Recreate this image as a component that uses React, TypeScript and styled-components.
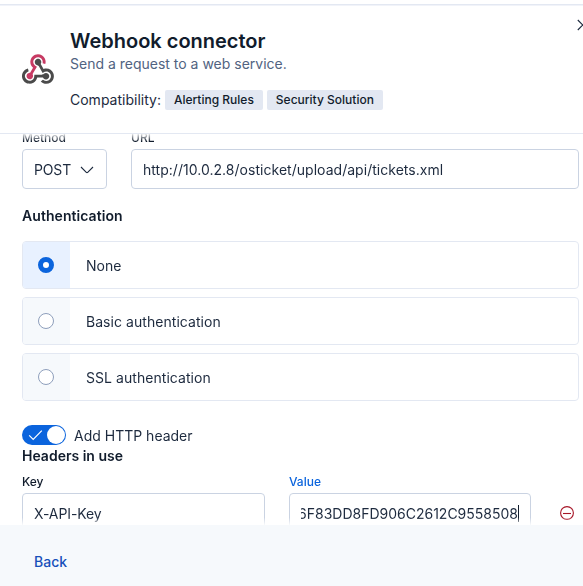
import React from "react";
import styled, { createGlobalStyle } from "styled-components";

const GlobalStyle = createGlobalStyle`
  * { box-sizing: border-box; }
  html, body { margin: 0; padding: 0; background: #fff; overflow: hidden; }
  body {
    font-family: Inter, "Liberation Sans", sans-serif;
    font-size: 14px;
    line-height: 20px;
    color: #1d2a3e;
  }
`;

const Flyout = styled.div`
  display: flex;
  flex-direction: column;
  width: 583px;
  height: 586px;
  overflow: hidden;
  background: #fff;
`;

const TopEdge = styled.div`
  flex: none;
  height: 6px;
  border-top: 4px solid #fff;
  background: linear-gradient(#e3e8f2 50%, #f1f3f9 50%);
`;

const Header = styled.header`
  flex: none;
  display: flex;
  height: 128px;
  padding: 23px 0 0 22px;
  border-bottom: 1px solid #e3e8f2;
`;

const LogoCell = styled.div`
  width: 32px;
  margin-right: 16px;
  padding-top: 25px;

  svg { display: block; }
`;

const HeaderText = styled.div`
  flex: 1;
`;

const Title = styled.h2`
  margin: 0;
  font-size: 20px;
  line-height: 24px;
  font-weight: 600;
  color: #111c2c;
`;

const Description = styled.p`
  margin: 0;
  line-height: 21px;
  color: #516381;
`;

const Compatibility = styled.div`
  display: flex;
  align-items: center;
  gap: 4px;
  margin-top: 16px;
`;

const Badge = styled.span`
  height: 20px;
  padding: 0 9px;
  border-radius: 2px;
  background: #e3e8f2;
  color: #111c2c;
  font-size: 12px;
  font-weight: 500;
  line-height: 20px;
`;

const CloseButton = styled.button`
  flex: none;
  width: 6px;
  height: 12px;
  margin-top: -10px;
  padding: 0;
  border: 0;
  background: none;
  overflow: hidden;

  svg { display: block; }
`;

const Body = styled.main`
  flex: none;
  height: 391px;
  padding: 0 4px 0 22px;
  overflow: hidden;
  mask-image: linear-gradient(
    rgba(0, 0, 0, 0.1) 0,
    #000 7.5px,
    #000 calc(100% - 7.5px),
    rgba(0, 0, 0, 0.1) 100%
  );
`;

const FieldRow = styled.div<{ $columns: string }>`
  display: grid;
  grid-template-columns: ${(p) => p.$columns};
  column-gap: 24px;
`;

const MethodRow = styled(FieldRow)`
  margin-top: -4px;
`;

const Label = styled.label<{ $active?: boolean }>`
  display: block;
  height: 16px;
  margin-bottom: 3px;
  font-size: 12px;
  font-weight: 500;
  line-height: 16px;
  color: ${(p) => (p.$active ? "#0b64dd" : "#111c2c")};
`;

const Control = styled.div<{ $spacing?: string }>`
  display: flex;
  align-items: center;
  height: 40px;
  padding: 1px 11px 0;
  border: 1px solid #cad3e2;
  border-radius: 4px;
  white-space: nowrap;
  letter-spacing: ${(p) => p.$spacing ?? "normal"};
`;

const SelectControl = styled(Control)`
  justify-content: space-between;
  padding-right: 12px;
`;

const ClippedValue = styled.div`
  display: flex;
  justify-content: flex-end;
  width: 100%;
  margin-right: -1px;
  overflow: hidden;
`;

const Caret = styled.i`
  flex: none;
  width: 1px;
  height: 17px;
  margin-top: 1px;
  background: #111c2c;
`;

const SectionTitle = styled.h3`
  margin: 0;
  font-size: 14px;
  line-height: 20px;
  font-weight: 600;
  color: #111c2c;
`;

const AuthTitle = styled(SectionTitle)`
  margin-top: 17px;
  letter-spacing: 0.06px;
`;

const OptionList = styled.div`
  display: flex;
  flex-direction: column;
  gap: 8px;
  margin-top: 15px;
`;

const Option = styled.label`
  display: flex;
  height: 48px;
  border: 1px solid #e3e8f2;
  border-radius: 4px;
  overflow: hidden;
`;

const OptionMark = styled.span<{ $checked?: boolean }>`
  display: flex;
  flex: none;
  align-items: center;
  width: 47px;
  padding: 1px 0 0 15px;
  background: ${(p) => (p.$checked ? "#e8f1ff" : "#f6f9fc")};
`;

const Radio = styled.span<{ $checked?: boolean }>`
  width: 16px;
  height: 16px;
  margin-bottom: 1px;
  border: ${(p) => (p.$checked ? "5px solid #0b64dd" : "1px solid #8e9fbc")};
  border-radius: 50%;
  background: #fff;
`;

const OptionText = styled.span`
  padding: 14px 16px 0;
  letter-spacing: 0.05px;
`;

const SwitchRow = styled.div`
  display: flex;
  align-items: center;
  gap: 8px;
  height: 20px;
  margin-top: 24px;
`;

const SwitchText = styled.span`
  padding-top: 2px;
`;

const Switch = styled.span`
  display: flex;
  align-items: center;
  justify-content: space-between;
  width: 44px;
  height: 20px;
  padding: 0 1px 0 6px;
  border-radius: 10px;
  background: #0b64dd;
`;

const SwitchThumb = styled.span`
  width: 18px;
  height: 18px;
  border-radius: 50%;
  background: #fff;
`;

const HeadersTitle = styled(SectionTitle)`
  margin-top: 1px;
`;

const HeaderFields = styled(FieldRow)`
  margin-top: 8px;
`;

const RemoveCell = styled.div`
  display: flex;
  padding: 32px 0 0 5px;
`;

const Footer = styled.footer`
  flex: 1;
  padding: 27px 34px;
  background: #f6f9fc;
`;

const BackButton = styled.button`
  display: block;
  padding: 0;
  border: 0;
  background: none;
  color: #1750ba;
  font: 500 14px/20px Inter, "Liberation Sans", sans-serif;
`;

const WebhookLogo = () => (
  <svg width="32" height="30" viewBox="0 0 256 239">
    <path
      fill="#C73A63"
      d="M119.54 100.503C108.93 118.339 98.765 135.611 88.388 152.754 85.723 157.154 84.404 160.739 86.533 166.333 92.411 181.787 84.119 196.826 68.535 200.908 53.838 204.759 39.519 195.1 36.603 179.365 34.019 165.438 44.827 151.785 60.182 149.608 61.469 149.424 62.782 149.403 64.945 149.241L88.303 110.073C73.612 95.465 64.868 78.389 66.803 57.229 68.171 42.272 74.053 29.346 84.803 18.752 105.393-1.536 136.805-4.821 161.049 10.751 184.333 25.709 194.997 54.845 185.907 79.782L164.564 73.992C167.418 60.127 165.307 47.677 155.956 37.011 149.778 29.969 141.85 26.278 132.835 24.918 114.764 22.188 97.021 33.798 91.756 51.536 85.78 71.667 94.825 88.111 119.54 100.503Z"
    />
    <path
      fill="#4B4B4B"
      d="M149.841 79.411L172.428 119.246C210.449 107.483 239.114 128.53 249.399 151.063 261.82 178.282 253.329 210.52 228.933 227.312 203.893 244.551 172.226 241.606 150.041 219.462L167.448 204.896C189.36 219.088 208.525 218.42 222.753 201.614 234.886 187.277 234.623 165.9 222.138 151.864 207.73 135.667 188.431 135.173 165.103 150.721 155.426 133.553 145.581 116.522 136.21 99.23 133.051 93.402 129.562 90.021 122.441 88.787 110.547 86.725 102.869 76.512 102.408 65.07 101.955 53.754 108.622 43.525 119.042 39.539 129.364 35.591 141.477 38.778 148.42 47.554 154.094 54.724 155.897 62.794 152.911 71.637 152.081 74.103 151.006 76.489 149.841 79.411Z"
    />
    <path
      fill="#4A4A4A"
      d="M167.707 187.21H121.936C117.55 205.254 108.074 219.822 91.746 229.086 79.054 236.286 65.374 238.727 50.814 236.377 24.006 232.053 2.086 207.92.156 180.745-2.028 149.962 19.131 122.599 47.334 116.453L53.196 137.717C27.32 150.919 18.364 167.553 25.605 188.353 31.981 206.657 50.09 216.69 69.753 212.81 89.833 208.848 99.957 192.16 98.721 165.378 117.757 165.378 136.809 165.181 155.847 165.475 163.281 165.592 169.02 164.821 174.62 158.267 183.841 147.483 200.811 148.456 210.741 158.641 220.889 169.05 220.403 185.798 209.664 195.768 199.303 205.388 182.933 204.874 173.24 194.509 171.248 192.372 169.678 189.835 167.707 187.21Z"
    />
  </svg>
);

const options = [
  { label: "None", checked: true },
  { label: "Basic authentication", checked: false },
  { label: "SSL authentication", checked: false },
];

export default function App() {
  return (
    <>
      <GlobalStyle />
      <Flyout>
        <TopEdge />
        <Header>
          <LogoCell>
            <WebhookLogo />
          </LogoCell>
          <HeaderText>
            <Title>Webhook connector</Title>
            <Description>Send a request to a web service.</Description>
            <Compatibility>
              <span>Compatibility:</span>
              <Badge>Alerting Rules</Badge>
              <Badge>Security Solution</Badge>
            </Compatibility>
          </HeaderText>
          <CloseButton aria-label="Close">
            <svg width="12" height="12" viewBox="0 0 12 12" fill="none" stroke="#1d2a3e" strokeWidth="1.1">
              <path d="M.8 1l10 10M10.8 1L.8 11" />
            </svg>
          </CloseButton>
        </Header>

        <Body>
          <MethodRow $columns="85px 1fr">
            <div>
              <Label>Method</Label>
              <SelectControl $spacing="-0.15px">
                <span>POST</span>
                <svg width="14" height="8" viewBox="0 0 14 8" fill="none" stroke="#1d2a3e" strokeWidth="1.1">
                  <path d="M1 1l5.3 5.3q.7.6 1.4 0L13 1" />
                </svg>
              </SelectControl>
            </div>
            <div>
              <Label>URL</Label>
              <Control $spacing="0.03px">http://10.0.2.8/osticket/upload/api/tickets.xml</Control>
            </div>
          </MethodRow>

          <AuthTitle>Authentication</AuthTitle>
          <OptionList>
            {options.map((option) => (
              <Option key={option.label}>
                <OptionMark $checked={option.checked}>
                  <Radio $checked={option.checked} />
                </OptionMark>
                <OptionText>{option.label}</OptionText>
              </Option>
            ))}
          </OptionList>

          <SwitchRow>
            <Switch>
              <svg width="15" height="12" viewBox="0 0 15 12" fill="none" stroke="#fff" strokeWidth="1.2">
                <path d="M1.2 6.3l4 4L13.8 1.7" />
              </svg>
              <SwitchThumb />
            </Switch>
            <SwitchText>Add HTTP header</SwitchText>
          </SwitchRow>
          <HeadersTitle>Headers in use</HeadersTitle>

          <HeaderFields $columns="243px 242px 1fr">
            <div>
              <Label>Key</Label>
              <Control $spacing="-0.1px">X-API-Key</Control>
            </div>
            <div>
              <Label $active>Value</Label>
              <Control>
                <ClippedValue>
                  <span>6F83DD8FD906C2612C9558508</span>
                  <Caret />
                </ClippedValue>
              </Control>
            </div>
            <RemoveCell>
              <svg width="14" height="14" viewBox="0 0 14 14" fill="none" stroke="#a71627" strokeWidth="1.1">
                <circle cx="7" cy="7" r="6.4" />
                <path d="M3 7.5h8" />
              </svg>
            </RemoveCell>
          </HeaderFields>
        </Body>

        <Footer>
          <BackButton>Back</BackButton>
        </Footer>
      </Flyout>
    </>
  );
}
